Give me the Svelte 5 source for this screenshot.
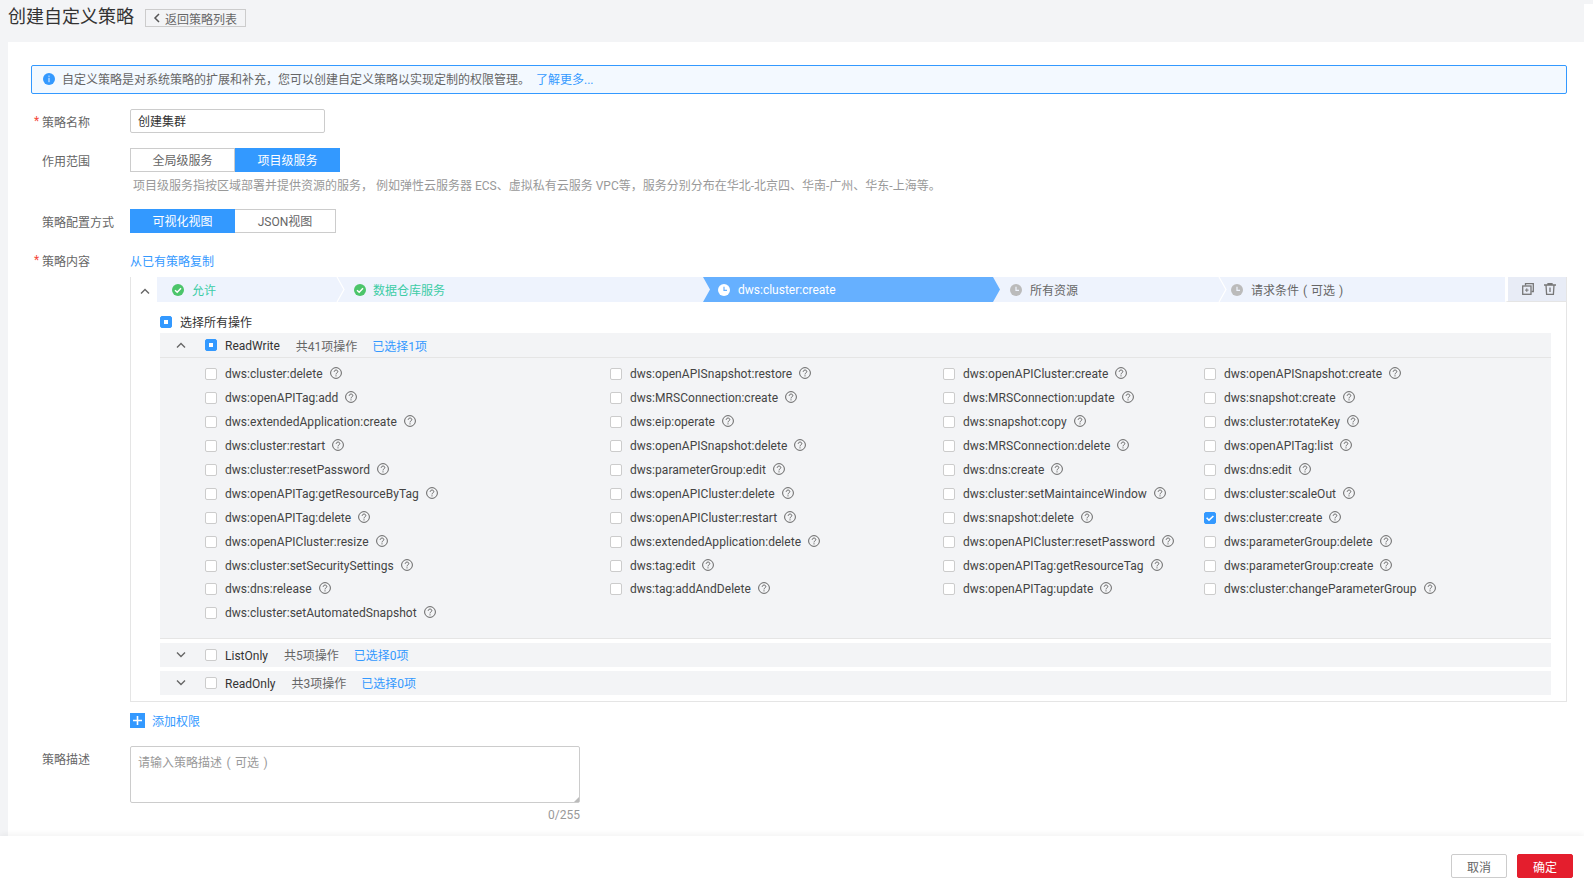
<script>
  const columns = [
    { width: 405, items: ["dws:cluster:delete", "dws:openAPITag:add", "dws:extendedApplication:create", "dws:cluster:restart", "dws:cluster:resetPassword", "dws:openAPITag:getResourceByTag", "dws:openAPITag:delete", "dws:openAPICluster:resize", "dws:cluster:setSecuritySettings", "dws:dns:release", "dws:cluster:setAutomatedSnapshot"] },
    { width: 333, items: ["dws:openAPISnapshot:restore", "dws:MRSConnection:create", "dws:eip:operate", "dws:openAPISnapshot:delete", "dws:parameterGroup:edit", "dws:openAPICluster:delete", "dws:openAPICluster:restart", "dws:extendedApplication:delete", "dws:tag:edit", "dws:tag:addAndDelete"] },
    { width: 261, items: ["dws:openAPICluster:create", "dws:MRSConnection:update", "dws:snapshot:copy", "dws:MRSConnection:delete", "dws:dns:create", "dws:cluster:setMaintainceWindow", "dws:snapshot:delete", "dws:openAPICluster:resetPassword", "dws:openAPITag:getResourceTag", "dws:openAPITag:update"] },
    { width: 300, items: ["dws:openAPISnapshot:create", "dws:snapshot:create", "dws:cluster:rotateKey", "dws:openAPITag:list", "dws:dns:edit", "dws:cluster:scaleOut", "dws:cluster:create", "dws:parameterGroup:delete", "dws:parameterGroup:create", "dws:cluster:changeParameterGroup"] },
  ];

  const steps = [
    { label: "允许", state: "done", width: 183, pad: 15 },
    { label: "数据仓库服务", state: "done", width: 363, pad: 14 },
    { label: "dws:cluster:create", state: "active", width: 297, pad: 15 },
    { label: "所有资源", state: "todo", width: 222, pad: 10 },
    { label: "请求条件 ( 可选 )", state: "todo", width: 283, pad: 9 },
  ];

  const closedGroups = [
    { name: "ListOnly", total: "共5项操作" },
    { name: "ReadOnly", total: "共3项操作" },
  ];
</script>

<div class="page">
  <header class="top">
    <h1>创建自定义策略</h1>
    <button class="back">
      <svg width="8" height="10" viewBox="0 0 8 10"><path d="M6 1 2 5l4 4" fill="none" stroke="#555" stroke-width="1.5" /></svg>
      返回策略列表
    </button>
  </header>

  <main class="panel">
    <div class="notice">
      <svg class="notice-icon" width="12" height="12" viewBox="0 0 12 12">
        <circle cx="6" cy="6" r="6" fill="#3399ff" />
        <rect x="5.4" y="2.6" width="1.2" height="1.2" fill="#cfe6ff" />
        <rect x="5.4" y="4.8" width="1.2" height="4.4" fill="#cfe6ff" />
      </svg>
      <span>自定义策略是对系统策略的扩展和补充，您可以创建自定义策略以实现定制的权限管理。</span>
      <span class="link learn">了解更多...</span>
    </div>

    <div class="row name-row">
      <span class="label required">策略名称</span>
      <div class="input">创建集群</div>
    </div>

    <div class="row scope-row">
      <span class="label">作用范围</span>
      <div class="seg">
        <span class="seg-item">全局级服务</span>
        <span class="seg-item on">项目级服务</span>
      </div>
    </div>
    <p class="hint">项目级服务指按区域部署并提供资源的服务， 例如弹性云服务器 ECS、虚拟私有云服务 VPC等，服务分别分布在华北-北京四、华南-广州、华东-上海等。</p>

    <div class="row config-row">
      <span class="label">策略配置方式</span>
      <div class="seg">
        <span class="seg-item on">可视化视图</span>
        <span class="seg-item json">JSON视图</span>
      </div>
    </div>

    <div class="row content-row">
      <span class="label required">策略内容</span>
      <span class="link">从已有策略复制</span>
    </div>

    <section class="editor">
      <div class="steps">
        <span class="collapse">
          <svg width="10" height="7" viewBox="0 0 10 7"><path d="M1 5.5 5 1.5l4 4" fill="none" stroke="#666" stroke-width="1.4" /></svg>
        </span>
        {#each steps as step, i}
          <div class="step {step.state}" style="width: {step.width}px; padding-left: {step.pad}px">
            {#if step.state === "done"}
              <svg width="12" height="12" viewBox="0 0 12 12">
                <circle cx="6" cy="6" r="6" fill="#4cc56a" />
                <path d="M3 6.2 5.2 8.3 9 4.2" fill="none" stroke="#fff" stroke-width="1.4" />
              </svg>
            {:else}
              <svg width="12" height="12" viewBox="0 0 12 12">
                <circle cx="6" cy="6" r="6" fill={step.state === "active" ? "#fff" : "#bbbbbb"} />
                <path d="M6 2.8V6.4H9" fill="none" stroke={step.state === "active" ? "#66b0ff" : "#eef3fd"} stroke-width="1.2" />
              </svg>
            {/if}
            <span class="step-label">{step.label}</span>
            {#if i < steps.length - 1 && step.state !== "active" && steps[i + 1].state !== "active"}
              <svg class="sep" width="9" height="25" viewBox="0 0 9 25"><path d="M1 0 8 12.5 1 25" fill="none" stroke="#fff" stroke-width="1.2" /></svg>
            {/if}
          </div>
        {/each}
        <div class="step-tools">
          <svg width="12" height="12" viewBox="0 0 12 12" fill="none" stroke="#777" stroke-width="1.3">
            <path d="M3.5 2.5V.7h7.8v7.8H9.5" />
            <rect x=".7" y="3" width="8.3" height="8.3" />
            <path d="M4.8 5.3v3.6M3 7.1h3.6" stroke-width="1" />
          </svg>
          <svg width="12" height="12" viewBox="0 0 12 12" fill="none" stroke="#777" stroke-width="1.3">
            <path d="M0 2h12M4 2V.7h4V2M2 2l.6 9.3h6.8L10 2M6 4.5v4.5" />
          </svg>
        </div>
      </div>

      <div class="editor-body">
        <label class="all">
          <span class="check part"></span>
          选择所有操作
        </label>

        <div class="group open">
          <div class="group-head">
            <svg class="chev" width="10" height="7" viewBox="0 0 10 7"><path d="M1 5.5 5 1.5l4 4" fill="none" stroke="#666" stroke-width="1.4" /></svg>
            <span class="check part"></span>
            <span class="group-name">ReadWrite</span>
            <span class="group-total">共41项操作</span>
            <span class="link">已选择1项</span>
          </div>
          <div class="actions">
            {#each columns as col}
              <div class="action-col" style="width: {col.width}px">
                {#each col.items as action}
                  <div class="action">
                    <span class="check" class:checked={action === "dws:cluster:create"}>
                      {#if action === "dws:cluster:create"}
                        <svg width="12" height="12" viewBox="0 0 12 12"><path d="M2.6 5.8 5 8.2 9.4 4" fill="none" stroke="#fff" stroke-width="1.6" /></svg>
                      {/if}
                    </span>
                    <span class="action-name">{action}</span>
                    <svg class="help" width="12" height="12" viewBox="0 0 12 12" fill="none" stroke="#666">
                      <circle cx="6" cy="6" r="5.4" />
                      <path d="M4.2 4.8C4.2 2.5 7.8 2.5 7.8 4.6 7.8 5.9 6 5.8 6 7.4" />
                      <path d="M6 8.3V9.4" />
                    </svg>
                  </div>
                {/each}
              </div>
            {/each}
          </div>
        </div>

        {#each closedGroups as group}
          <div class="group closed">
            <div class="group-head">
              <svg class="chev" width="10" height="7" viewBox="0 0 10 7"><path d="M1 1.5 5 5.5l4-4" fill="none" stroke="#666" stroke-width="1.4" /></svg>
              <span class="check"></span>
              <span class="group-name">{group.name}</span>
              <span class="group-total">{group.total}</span>
              <span class="link">已选择0项</span>
            </div>
          </div>
        {/each}
      </div>
    </section>

    <div class="add">
      <span class="add-icon">
        <svg width="15" height="15" viewBox="0 0 15 15"><path d="M7.5 3v9M3 7.5h9" stroke="#fff" stroke-width="1.6" /></svg>
      </span>
      <span class="link">添加权限</span>
    </div>

    <div class="row desc-row">
      <span class="label">策略描述</span>
      <div class="desc">
        <div class="textarea">
          请输入策略描述 ( 可选 )
          <svg class="grip" width="5" height="5" viewBox="0 0 5 5"><path d="M5 0V5H0Z" fill="#bbb" /></svg>
        </div>
        <div class="count">0/255</div>
      </div>
    </div>
  </main>

  <footer class="bottom">
    <button class="btn">取消</button>
    <button class="btn primary">确定</button>
  </footer>
</div>

<style>
  :global(body) {
    background: linear-gradient(#f3f4f6 4px, #fff 4px);
    font-family: Roboto, "Noto Sans CJK SC", sans-serif;
    font-size: 12px;
    color: #666;
  }

  .page {
    width: 1584px;
    height: 890px;
    display: flex;
    flex-direction: column;
    background: #f3f4f6;
    overflow: hidden;
  }

  .top {
    height: 42px;
    flex: none;
    display: flex;
    align-items: flex-start;
    padding-left: 8px;
  }

  h1 {
    margin: 5px 0 0;
    font-size: 18px;
    line-height: 24px;
    font-weight: 400;
    color: #333;
  }

  .back {
    margin: 9px 0 0 11px;
    width: 101px;
    height: 18px;
    padding: 0 0 0 7px;
    display: flex;
    align-items: center;
    gap: 4px;
    background: transparent;
    border: 1px solid #ccc;
    font: inherit;
    color: #666;
  }

  .panel {
    flex: 1;
    margin-left: 8px;
    padding: 23px 0 0 23px;
    background: #fff;
    min-height: 0;
  }

  .notice {
    width: 1536px;
    height: 29px;
    box-sizing: border-box;
    display: flex;
    align-items: center;
    padding: 0 0 2px 11px;
    background: #f3f9ff;
    border: 1px solid #3399ff;
    border-radius: 2px;
  }

  .notice-icon {
    margin-right: 7px;
  }

  .link {
    color: #3399ff;
  }

  .learn {
    margin-left: 6px;
  }

  .row {
    display: flex;
    align-items: center;
  }

  .label {
    width: 99px;
    flex: none;
    box-sizing: border-box;
    padding-left: 11px;
    position: relative;
    color: #666;
  }

  .required::before {
    content: "*";
    position: absolute;
    left: 3px;
    top: 1px;
    color: #f5483b;
  }

  .name-row {
    margin-top: 15px;
  }

  .input {
    width: 195px;
    height: 24px;
    box-sizing: border-box;
    padding-left: 7px;
    line-height: 24px;
    border: 1px solid #ccc;
    border-radius: 2px;
    color: #333;
  }

  .scope-row {
    margin-top: 15px;
  }

  .seg {
    display: flex;
  }

  .seg-item {
    width: 105px;
    height: 24px;
    box-sizing: border-box;
    text-align: center;
    line-height: 24px;
    border: 1px solid #ccc;
    color: #666;
  }

  .seg-item.on {
    background: #3399ff;
    border-color: #3399ff;
    color: #fff;
  }

  .seg-item.json {
    width: 101px;
    border-left: 0;
  }

  .hint {
    margin: 6px 0 0 102px;
    height: 18px;
    line-height: 16px;
    color: #999;
  }

  .config-row {
    margin-top: 13px;
  }

  .content-row {
    margin-top: 18px;
    height: 18px;
  }

  .editor {
    margin: 8px 0 0 99px;
    width: 1437px;
    height: 425px;
    box-sizing: border-box;
    border: 1px solid #e5e5e5;
    border-top: 0;
  }

  .steps {
    display: flex;
    height: 25px;
    margin-left: -1px;
    background: #eef3fd;
  }

  .collapse {
    width: 27px;
    flex: none;
    box-sizing: border-box;
    padding-top: 7px;
    padding-left: 9px;
    background: #fff;
    border-left: 1px solid #e5e5e5;
  }

  .step {
    position: relative;
    flex: none;
    box-sizing: border-box;
    display: flex;
    align-items: center;
    gap: 8px;
    color: #666;
  }

  .step:nth-child(3) {
    gap: 7px;
  }

  .step:nth-child(6) .step-label {
    word-spacing: 1px;
  }

  .step svg {
    flex: none;
  }

  .step.done {
    color: #3dcca6;
  }

  .step.active {
    color: #fff;
    background: #66b0ff;
    clip-path: polygon(0 0, calc(100% - 7px) 0, 100% 50%, calc(100% - 7px) 100%, 0 100%, 7px 50%);
  }

  .step .sep {
    position: absolute;
    right: -5px;
    top: 0;
  }

  .step-tools {
    flex: 1;
    box-sizing: border-box;
    display: flex;
    align-items: center;
    gap: 10px;
    padding-left: 14px;
    background: #e8ecf6;
    border-left: 3px solid #fff;
    border-bottom: 1px solid #e5e5e5;
  }

  .editor-body {
    padding: 0 15px 0 29px;
  }

  .all {
    display: flex;
    align-items: center;
    gap: 8px;
    height: 31px;
    box-sizing: border-box;
    padding-top: 8px;
    color: #333;
  }

  .check {
    width: 12px;
    height: 12px;
    flex: none;
    box-sizing: border-box;
    position: relative;
    display: block;
    background: #fff;
    border: 1px solid #ccc;
    border-radius: 2px;
  }

  .check.part,
  .check.checked {
    background: #3399ff;
    border-color: #3399ff;
  }

  .check.part::after {
    content: "";
    position: absolute;
    left: 3px;
    top: 3px;
    width: 4px;
    height: 4px;
    background: #fff;
  }

  .check svg {
    display: block;
    margin: -1px;
  }

  .group {
    background: #f3f4f6;
  }

  .group-head {
    display: flex;
    align-items: center;
    height: 24px;
    padding-left: 16px;
  }

  .chev {
    margin-right: 19px;
  }

  .group-name {
    margin: 1px 0 0 8px;
    color: #333;
  }

  .group-total {
    margin-left: 16px;
  }

  .group-head .link {
    margin-left: 15px;
  }

  .closed .chev,
  .closed .group-total,
  .closed .link {
    margin-top: -2px;
  }

  .open {
    border-bottom: 1px solid #e5e5e5;
  }

  .open .group-head {
    height: 25px;
    border-bottom: 1px solid #e5e5e5;
    box-sizing: border-box;
  }

  .closed {
    margin-top: 4px;
  }

  .actions {
    display: flex;
    height: 280px;
    box-sizing: border-box;
    padding: 4.5px 0 0 45px;
  }

  .action-col {
    flex: none;
  }

  .action {
    height: 23.9px;
    display: flex;
    align-items: center;
    color: #444;
  }

  .action-name {
    letter-spacing: 0.04px;
  }

  .action .check {
    margin-right: 8px;
  }

  .help {
    margin: -2px 0 0 7px;
  }

  .add {
    display: flex;
    align-items: center;
    gap: 7px;
    margin: 11px 0 0 99px;
    height: 15px;
  }

  .add-icon {
    width: 15px;
    height: 15px;
    background: #3399ff;
  }

  .add-icon svg {
    display: block;
  }

  .desc-row {
    align-items: flex-start;
    margin-top: 18px;
  }

  .desc-row .label {
    margin-top: 4px;
  }

  .desc {
    width: 450px;
  }

  .textarea {
    position: relative;
    height: 57px;
    box-sizing: border-box;
    padding: 6px 7px;
    border: 1px solid #ccc;
    border-radius: 2px;
    color: #999;
    word-spacing: 1.5px;
  }

  .grip {
    position: absolute;
    right: 0;
    bottom: 0;
  }

  .count {
    margin-top: 5px;
    text-align: right;
    color: #999;
  }

  .bottom {
    height: 54px;
    flex: none;
    display: flex;
    justify-content: flex-end;
    gap: 10px;
    padding: 18px 11px 0 0;
    box-sizing: border-box;
    background: #fff;
    box-shadow: 0 -2px 6px rgba(0, 0, 0, 0.05);
  }

  .btn {
    width: 56px;
    height: 24px;
    padding: 0;
    font: inherit;
    color: #666;
    background: #fff;
    border: 1px solid #ccc;
    border-radius: 2px;
  }

  .btn.primary {
    background: #e41e2d;
    border-color: #e41e2d;
    color: #fff;
  }
</style>
